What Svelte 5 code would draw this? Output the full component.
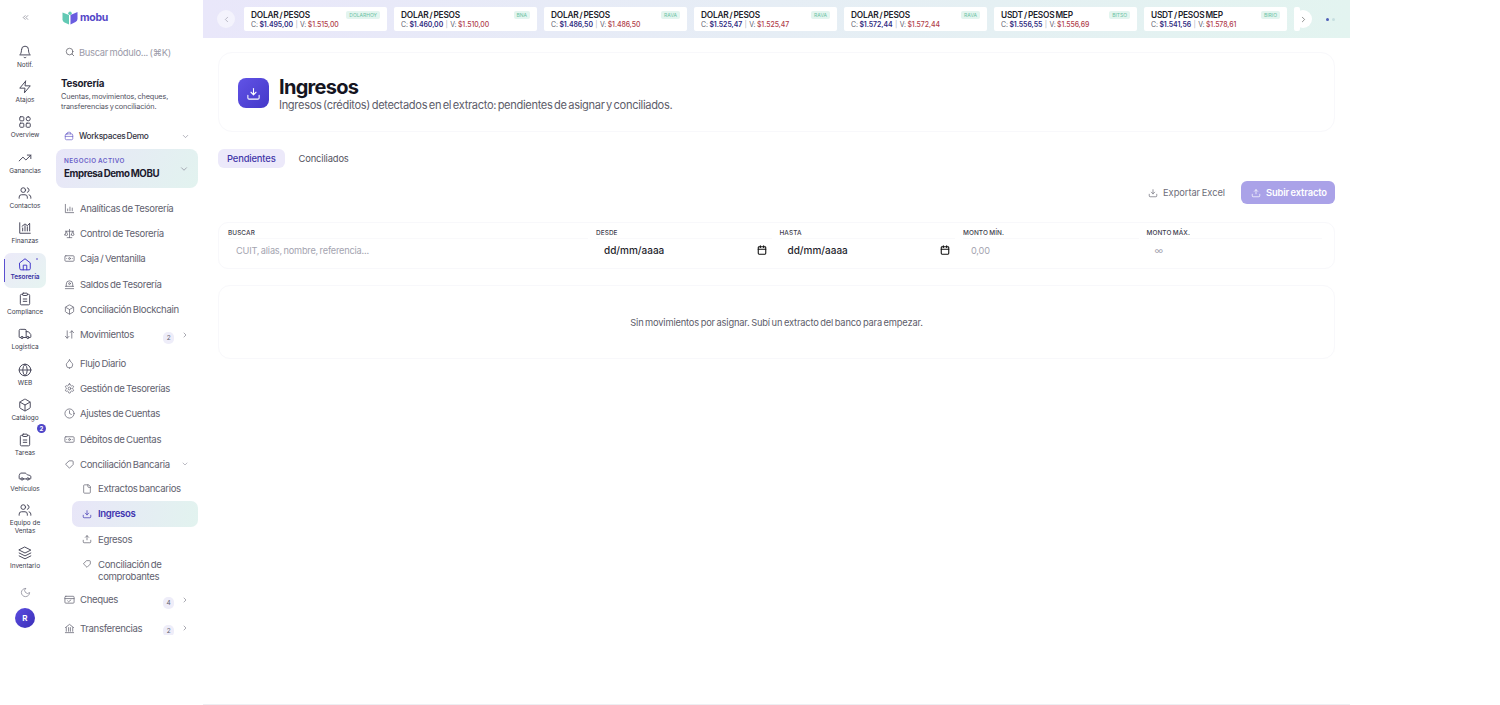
<script>
  const icons = {
    bell: '<path d="M6 8a6 6 0 0 1 12 0c0 7 3 9 3 9H3s3-2 3-9"/><path d="M10.3 21a1.94 1.94 0 0 0 3.4 0"/>',
    zap: '<path d="M13 2 3 14h9l-1 8 10-12h-9l1-8z"/>',
    grid: '<rect x="3" y="3" width="7" height="7" rx="1.5"/><rect x="14" y="3" width="7" height="7" rx="3.5"/><rect x="3" y="14" width="7" height="7" rx="1.5"/><rect x="14" y="14" width="7" height="7" rx="1.5"/>',
    trend: '<path d="m22 7-8.5 8.5-5-5L2 17"/><path d="M16 7h6v6"/>',
    users: '<path d="M16 21v-2a4 4 0 0 0-4-4H6a4 4 0 0 0-4 4v2"/><circle cx="9" cy="7" r="4"/><path d="M22 21v-2a4 4 0 0 0-3-3.87"/><path d="M16 3.13a4 4 0 0 1 0 7.75"/>',
    chart: '<path d="M3 3v18h18"/><path d="M8 17v-5"/><path d="M12 17V8"/><path d="M16 17v-7"/><path d="M20 17V5"/><path d="m7 9 5-4 4 3 4-4"/>',
    bars: '<path d="M3 3v18h18"/><path d="M8 17v-4"/><path d="M13 17V9"/><path d="M18 17v-6"/>',
    home: '<path d="m3 10 9-7 9 7v10a2 2 0 0 1-2 2H5a2 2 0 0 1-2-2z"/><path d="M9 22v-8h6v8"/>',
    clip: '<rect x="8" y="2" width="8" height="4" rx="1"/><path d="M16 4h2a2 2 0 0 1 2 2v14a2 2 0 0 1-2 2H6a2 2 0 0 1-2-2V6a2 2 0 0 1 2-2h2"/><path d="M9 12h6"/><path d="M9 16h6"/>',
    truck: '<path d="M14 18V6a2 2 0 0 0-2-2H4a2 2 0 0 0-2 2v11a1 1 0 0 0 1 1h2"/><path d="M15 18H9"/><path d="M19 18h2a1 1 0 0 0 1-1v-3.65a1 1 0 0 0-.22-.624l-3.48-4.35A1 1 0 0 0 17.52 8H14"/><circle cx="17" cy="18" r="2"/><circle cx="7" cy="18" r="2"/>',
    globe: '<circle cx="12" cy="12" r="10"/><path d="M12 2a14.5 14.5 0 0 0 0 20 14.5 14.5 0 0 0 0-20"/><path d="M2 12h20"/>',
    box: '<path d="M21 8a2 2 0 0 0-1-1.73l-7-4a2 2 0 0 0-2 0l-7 4A2 2 0 0 0 3 8v8a2 2 0 0 0 1 1.73l7 4a2 2 0 0 0 2 0l7-4A2 2 0 0 0 21 16Z"/><path d="m3.3 7 8.7 5 8.7-5"/><path d="M12 22V12"/>',
    car: '<path d="M19 17h2c.6 0 1-.4 1-1v-3c0-.9-.7-1.7-1.5-1.9C18.7 10.6 16 10 16 10s-1.3-1.4-2.2-2.3c-.5-.4-1.1-.7-1.8-.7H5c-.6 0-1.1.4-1.4.9l-1.4 2.9A3.7 3.7 0 0 0 2 12v4c0 .6.4 1 1 1h2"/><circle cx="7" cy="17" r="2"/><path d="M9 17h6"/><circle cx="17" cy="17" r="2"/>',
    layers: '<path d="m12 2 10 5-10 5L2 7z"/><path d="m2 12 10 5 10-5"/><path d="m2 17 10 5 10-5"/>',
    moon: '<path d="M12 3a6 6 0 0 0 9 9 9 9 0 1 1-9-9Z"/>',
    search: '<circle cx="11" cy="11" r="8"/><path d="m21 21-4.3-4.3"/>',
    brief: '<rect x="3" y="7" width="18" height="14" rx="3"/><path d="M8 7V5a2 2 0 0 1 2-2h4a2 2 0 0 1 2 2v2"/><path d="M3 13h18"/>',
    scale: '<path d="M12 3v18"/><path d="M7 21h10"/><path d="M3 7h18"/><path d="m2 15 3-8 3 8a4 4 0 0 1-6 0Z"/><path d="m16 15 3-8 3 8a4 4 0 0 1-6 0Z"/>',
    cash: '<rect x="2" y="6" width="20" height="12" rx="2"/><circle cx="12" cy="12" r="2"/><path d="M6 12h.01M18 12h.01"/>',
    vault: '<path d="M5 16v-5a7 7 0 0 1 14 0v5"/><path d="M3 16h18"/><path d="M3 21h18"/><circle cx="12" cy="10" r="2"/>',
    updown: '<path d="m3 16 4 4 4-4"/><path d="M7 20V4"/><path d="m21 8-4-4-4 4"/><path d="M17 4v16"/>',
    drop: '<path d="M12 22a7 7 0 0 0 7-7c0-2-1-3.9-3-5.5s-3.5-4-4-6.5c-.5 2.5-2 4.9-4 6.5C6 11.1 5 13 5 15a7 7 0 0 0 7 7z"/>',
    gear: '<path d="M12.22 2h-.44a2 2 0 0 0-2 2v.18a2 2 0 0 1-1 1.73l-.43.25a2 2 0 0 1-2 0l-.15-.08a2 2 0 0 0-2.73.73l-.22.38a2 2 0 0 0 .73 2.73l.15.1a2 2 0 0 1 1 1.72v.51a2 2 0 0 1-1 1.74l-.15.09a2 2 0 0 0-.73 2.73l.22.38a2 2 0 0 0 2.73.73l.15-.08a2 2 0 0 1 2 0l.43.25a2 2 0 0 1 1 1.73V20a2 2 0 0 0 2 2h.44a2 2 0 0 0 2-2v-.18a2 2 0 0 1 1-1.73l.43-.25a2 2 0 0 1 2 0l.15.08a2 2 0 0 0 2.73-.73l.22-.39a2 2 0 0 0-.73-2.73l-.15-.08a2 2 0 0 1-1-1.74v-.5a2 2 0 0 1 1-1.74l.15-.09a2 2 0 0 0 .73-2.73l-.22-.38a2 2 0 0 0-2.73-.73l-.15.08a2 2 0 0 1-2 0l-.43-.25a2 2 0 0 1-1-1.73V4a2 2 0 0 0-2-2z"/><circle cx="12" cy="12" r="3"/>',
    clock: '<circle cx="12" cy="12" r="10"/><path d="M12 6v6l4 2"/>',
    tag: '<path d="M12 4h6a2 2 0 0 1 2 2v6l-8 8-8-8z"/>',
    file: '<path d="M15 2H6a2 2 0 0 0-2 2v16a2 2 0 0 0 2 2h12a2 2 0 0 0 2-2V7Z"/><path d="M14 2v4a2 2 0 0 0 2 2h4"/>',
    down: '<path d="M21 15v4a2 2 0 0 1-2 2H5a2 2 0 0 1-2-2v-4"/><path d="m8 10 4 4 4-4"/><path d="M12 14V4"/>',
    up: '<path d="M21 15v4a2 2 0 0 1-2 2H5a2 2 0 0 1-2-2v-4"/><path d="m16 8-4-4-4 4"/><path d="M12 4v10"/>',
    cheque: '<rect x="2" y="5" width="20" height="15" rx="2"/><path d="M2 10h20"/><path d="m8 15 2 2 5-4"/>',
    bank: '<path d="m3 10 9-7 9 7"/><path d="M5 10v8M19 10v8M10 10v8M14 10v8"/><path d="M3 21h18"/>',
    calendar: '<rect x="3" y="4" width="18" height="18" rx="2"/><path d="M3 10h18"/><path d="M8 2v4M16 2v4"/>',
    left: '<path d="m15 18-6-6 6-6"/>',
    right: '<path d="m9 18 6-6-6-6"/>',
    chevdown: '<path d="m6 9 6 6 6-6"/>',
    dleft: '<path d="m11 17-5-5 5-5"/><path d="m18 17-5-5 5-5"/>'
  };

  const rail = [
    { icon: 'bell', label: 'Notif.' },
    { icon: 'zap', label: 'Atajos' },
    { icon: 'grid', label: 'Overview' },
    { icon: 'trend', label: 'Ganancias' },
    { icon: 'users', label: 'Contactos' },
    { icon: 'chart', label: 'Finanzas' },
    { icon: 'home', label: 'Tesorería', active: true },
    { icon: 'clip', label: 'Compliance' },
    { icon: 'truck', label: 'Logística' },
    { icon: 'globe', label: 'WEB' },
    { icon: 'box', label: 'Catálogo' },
    { icon: 'clip', label: 'Tareas', badge: 2 },
    { icon: 'car', label: 'Vehículos' },
    { icon: 'users', label: 'Equipo de Ventas' },
    { icon: 'layers', label: 'Inventario' }
  ];

  const topMenu = [
    { icon: 'bars', label: 'Analíticas de Tesorería' },
    { icon: 'scale', label: 'Control de Tesorería' },
    { icon: 'cash', label: 'Caja / Ventanilla' },
    { icon: 'vault', label: 'Saldos de Tesorería' },
    { icon: 'box', label: 'Conciliación Blockchain' },
    { icon: 'updown', label: 'Movimientos', count: 2 },
    { icon: 'drop', label: 'Flujo Diario' },
    { icon: 'gear', label: 'Gestión de Tesorerías' },
    { icon: 'clock', label: 'Ajustes de Cuentas' },
    { icon: 'cash', label: 'Débitos de Cuentas' }
  ];

  const quotes = [
    { pair: 'DOLAR / PESOS', tag: 'DOLARHOY', buy: '$1.495,00', sell: '$1.515,00' },
    { pair: 'DOLAR / PESOS', tag: 'BNA', buy: '$1.460,00', sell: '$1.510,00' },
    { pair: 'DOLAR / PESOS', tag: 'RAVA', buy: '$1.486,50', sell: '$1.486,50' },
    { pair: 'DOLAR / PESOS', tag: 'RAVA', buy: '$1.525,47', sell: '$1.525,47' },
    { pair: 'DOLAR / PESOS', tag: 'RAVA', buy: '$1.572,44', sell: '$1.572,44' },
    { pair: 'USDT / PESOS MEP', tag: 'BITSO', buy: '$1.556,55', sell: '$1.556,69' },
    { pair: 'USDT / PESOS MEP', tag: 'BIRIO', buy: '$1.541,56', sell: '$1.578,61' }
  ];
</script>

{#snippet icon(name, size)}
  <svg class="ico" width={size} height={size} viewBox="0 0 24 24" fill="none" stroke="currentColor" stroke-width="1.7" stroke-linecap="round" stroke-linejoin="round">{@html icons[name]}</svg>
{/snippet}

{#snippet menuRow(item)}
  <div class="menu-row" class:tall={item.count}>
    <span class="menu-ico">{@render icon(item.icon, 11)}</span>
    <span class="menu-label">{item.label}</span>
    {#if item.count}
      <span class="count">{item.count}</span>
      <span class="menu-chev">{@render icon('right', 8)}</span>
    {/if}
  </div>
{/snippet}

<div class="app">
  <nav class="rail">
    <div class="collapse">{@render icon('dleft', 9)}</div>
    <div class="rail-list">
      {#each rail as item}
        <div class="rail-item" class:active={item.active}>
          {@render icon(item.icon, 14)}
          <span>{item.label}</span>
          {#if item.badge}<b class="rail-badge">{item.badge}</b>{/if}
          {#if item.active}<i class="rail-dot"></i>{/if}
        </div>
      {/each}
    </div>
    <div class="moon">{@render icon('moon', 11)}</div>
    <div class="avatar">R</div>
  </nav>

  <aside class="panel">
    <div class="logo">
      <svg width="16" height="14" viewBox="0 0 15 14">
        <path d="M0 1.5 6.500 4v9.500L2 11.500Q0 10.500 0 8.500Z" fill="#62c9b4" />
        <path d="M15 1 8 4v9.500L13 11Q15 10 15 8Z" fill="#6a5de0" />
        <circle cx="7.500" cy="2.300" r="1.700" fill="#62c9b4" />
      </svg>
      <span>mobu</span>
    </div>

    <div class="search">
      {@render icon('search', 10)}
      <span>Buscar módulo... (⌘K)</span>
    </div>

    <div class="section">
      <h2>Tesorería</h2>
      <p>Cuentas, movimientos, cheques, transferencias y conciliación.</p>
    </div>

    <div class="workspace">
      <span class="ws-ico">{@render icon('brief', 10)}</span>
      <span class="ws-name">Workspaces Demo</span>
      <span class="ws-chev">{@render icon('chevdown', 9)}</span>
    </div>

    <div class="business">
      <div>
        <small>NEGOCIO ACTIVO</small>
        <strong>Empresa Demo MOBU</strong>
      </div>
      <span class="ws-chev">{@render icon('chevdown', 10)}</span>
    </div>

    <div class="menu">
      {#each topMenu as item}
        {@render menuRow(item)}
      {/each}
      <div class="menu-row">
        <span class="menu-ico">{@render icon('tag', 11)}</span>
        <span class="menu-label">Conciliación Bancaria</span>
        <span class="menu-chev open">{@render icon('chevdown', 8)}</span>
      </div>
      <div class="sub">
        <div class="sub-row">{@render icon('file', 10)}<span>Extractos bancarios</span></div>
        <div class="sub-row current">{@render icon('down', 10)}<span>Ingresos</span></div>
        <div class="sub-row">{@render icon('up', 10)}<span>Egresos</span></div>
        <div class="sub-row wrap">{@render icon('tag', 10)}<span>Conciliación de comprobantes</span></div>
      </div>
      {@render menuRow({ icon: 'cheque', label: 'Cheques', count: 4 })}
      {@render menuRow({ icon: 'bank', label: 'Transferencias', count: 2 })}
    </div>
  </aside>

  <main class="main">
    <div class="ticker">
      <button class="nav-btn" aria-label="Anterior">{@render icon('left', 9)}</button>
      <div class="quotes">
        {#each quotes as q}
          <div class="quote">
            <div class="quote-top">
              <span class="pair">{q.pair}</span>
              <span class="tag">{q.tag}</span>
            </div>
            <div class="prices">C: <b>{q.buy}</b> <i>|</i> V: <em>{q.sell}</em></div>
          </div>
        {/each}
        <div class="quote stub"></div>
      </div>
      <button class="nav-btn next" aria-label="Siguiente">{@render icon('right', 9)}</button>
      <div class="dots"><span></span><span></span></div>
    </div>

    <div class="content">
      <header class="hero">
        <div class="hero-ico">{@render icon('down', 15)}</div>
        <div>
          <h1>Ingresos</h1>
          <p>Ingresos (créditos) detectados en el extracto: pendientes de asignar y conciliados.</p>
        </div>
      </header>

      <div class="tabs">
        <span class="tab on">Pendientes</span>
        <span class="tab">Conciliados</span>
      </div>

      <div class="actions">
        <span class="export">{@render icon('down', 10)}Exportar Excel</span>
        <span class="upload">{@render icon('up', 10)}Subir extracto</span>
      </div>

      <section class="filters">
        <div class="field">
          <label for="q">BUSCAR</label>
          <div id="q" class="input muted">CUIT, alias, nombre, referencia...</div>
        </div>
        <div class="field">
          <label for="d1">DESDE</label>
          <div id="d1" class="input date">dd/mm/aaaa {@render icon('calendar', 10)}</div>
        </div>
        <div class="field">
          <label for="d2">HASTA</label>
          <div id="d2" class="input date">dd/mm/aaaa {@render icon('calendar', 10)}</div>
        </div>
        <div class="field">
          <label for="m1">MONTO MÍN.</label>
          <div id="m1" class="input muted">0,00</div>
        </div>
        <div class="field">
          <label for="m2">MONTO MÁX.</label>
          <div id="m2" class="input muted">∞</div>
        </div>
      </section>

      <section class="empty">Sin movimientos por asignar. Subí un extracto del banco para empezar.</section>
    </div>
  </main>
</div>

<style>
  :global(body) {
    margin: 0;
    background: #fff;
  }

  .app {
    display: flex;
    width: 1350px;
    height: 705px;
    font-family: Inter, 'Open Sans', sans-serif;
    word-spacing: -0.8px;
    color: #1c1b2e;
    overflow: hidden;
  }

  .ico {
    display: block;
    flex-shrink: 0;
  }

  /* rail */
  .rail {
    width: 50px;
    height: 632px;
    flex-shrink: 0;
    display: flex;
    flex-direction: column;
    align-items: center;
  }

  .collapse {
    height: 35px;
    display: flex;
    align-items: center;
    color: #6b6b7b;
  }

  .rail-list {
    width: 100%;
    padding-top: 6px;
  }

  .rail-item {
    position: relative;
    margin: 0 4px;
    min-height: 31.330px;
    padding-bottom: 4px;
    display: flex;
    flex-direction: column;
    align-items: center;
    justify-content: center;
    gap: 2px;
    color: #4a4a5c;
  }

  .rail-item:nth-child(14),
  .rail-item:nth-child(15) {
    margin-top: 3px;
  }

  .rail-item span {
    font-size: 6.500px;
    line-height: 8px;
    text-align: center;
    letter-spacing: -0.05px;
    color: #3d3d4d;
    word-spacing: 0;
  }

  .rail-item.active {
    background: linear-gradient(135deg, #eceaf9, #e6f4f1);
    border-radius: 7px;
    color: #4338ca;
  }

  .rail-item.active::before {
    content: '';
    position: absolute;
    left: 0;
    top: 6px;
    bottom: 6px;
    width: 1px;
    background: #5a4fd0;
  }

  .rail-item.active span {
    color: #3730a3;
    font-weight: 600;
  }

  .rail-dot {
    position: absolute;
    top: 5px;
    right: 8px;
    width: 2px;
    height: 2px;
    border-radius: 50%;
    background: #8b85d8;
  }

  .rail-badge {
    position: absolute;
    top: -6px;
    right: 0;
    width: 9px;
    height: 9px;
    border-radius: 50%;
    background: #4f46c8;
    color: #fff;
    font-size: 6px;
    line-height: 9px;
    text-align: center;
  }

  .moon {
    margin-top: 9px;
    color: #8a8a98;
  }

  .avatar {
    margin-top: 10px;
    width: 20px;
    height: 20px;
    border-radius: 50%;
    background: linear-gradient(135deg, #5b4de0, #3b2fb8);
    color: #fff;
    font-size: 8px;
    font-weight: 700;
    line-height: 20px;
    text-align: center;
  }

  /* side panel */
  .panel {
    width: 153px;
    height: 635px;
    flex-shrink: 0;
    overflow: hidden;
    padding: 0 5px 0 6px;
    box-sizing: border-box;
  }

  .logo {
    display: flex;
    align-items: center;
    gap: 2px;
    height: 35px;
    padding-left: 6px;
    color: #5548c8;
    font-size: 10.500px;
    font-weight: 700;
    letter-spacing: -0.3px;
  }

  .search {
    display: flex;
    align-items: center;
    gap: 4px;
    height: 26px;
    margin: 4px 3px 0 3px;
    padding-left: 6px;
    color: #9a9aa8;
    font-size: 9.400px;
    letter-spacing: -0.3px;
  }

  .search :global(svg) {
    color: #55555f;
  }

  .section {
    padding: 12px 5px 0;
  }

  .section h2 {
    margin: 0;
    font-size: 9.800px;
    line-height: 13px;
    font-weight: 700;
    letter-spacing: -0.2px;
  }

  .section p {
    margin: 2px 0 0;
    font-size: 7.300px;
    line-height: 9.500px;
    color: #50505e;
    letter-spacing: -0.12px;
  }

  .workspace {
    display: flex;
    align-items: center;
    gap: 5px;
    height: 24px;
    margin-top: 13px;
    padding: 0 8px;
    font-size: 8.300px;
    font-weight: 500;
    letter-spacing: -0.3px;
    color: #33333f;
  }

  .ws-ico {
    color: #6a5fc8;
  }

  .ws-name {
    flex: 1;
  }

  .ws-chev {
    color: #8a8a98;
  }

  .business {
    display: flex;
    align-items: center;
    justify-content: space-between;
    height: 39px;
    margin-top: 1px;
    padding: 0 9px 0 8px;
    border-radius: 8px;
    background: linear-gradient(120deg, #e8e6f8, #e2f3ef);
  }

  .business small {
    display: block;
    font-size: 6.300px;
    line-height: 9px;
    font-weight: 600;
    color: #6a5fc8;
    letter-spacing: 0.45px;
    word-spacing: -0.5px;
  }

  .business strong {
    display: block;
    margin-top: 2px;
    font-size: 9.700px;
    line-height: 12px;
    font-weight: 700;
    letter-spacing: -0.4px;
  }

  .menu {
    margin-top: 7.500px;
  }

  .menu-row {
    display: flex;
    align-items: center;
    height: 25.300px;
    padding: 0 8px;
    color: #62626f;
    font-size: 9.600px;
    letter-spacing: -0.35px;
  }

  .menu-row.tall {
    height: 28.500px;
    box-sizing: border-box;
    padding-bottom: 3px;
  }

  .menu-ico {
    width: 16px;
    color: #6a6a78;
  }

  .menu-label {
    flex: 1;
    white-space: nowrap;
  }

  .count {
    width: 11px;
    height: 12px;
    margin: 6px 7px 0 0;
    border-radius: 5px;
    background: #eeedf9;
    font-size: 6.500px;
    line-height: 12px;
    text-align: center;
  }

  .menu-chev {
    margin-right: 1px;
    color: #6a6a78;
  }

  .menu-chev.open {
    color: #8a8a98;
  }

  .sub {
    margin: -1px 0 0 16px;
  }

  .sub-row {
    display: flex;
    align-items: center;
    gap: 6px;
    height: 25.300px;
    padding-left: 10px;
    color: #62626f;
    font-size: 9.600px;
    letter-spacing: -0.35px;
  }

  .sub-row.current {
    background: linear-gradient(100deg, #e8e6f8, #e2f3ef);
    border-radius: 7px;
    color: #3f35b0;
    font-weight: 600;
  }

  .sub-row.wrap {
    height: 35px;
    align-items: flex-start;
    padding-top: 7px;
    box-sizing: border-box;
    line-height: 12.500px;
  }

  /* main */
  .main {
    flex: 1;
    min-width: 0;
    border-bottom: 1px solid #eeeef2;
    height: 704px;
  }

  .ticker {
    display: flex;
    align-items: center;
    height: 38px;
    background: linear-gradient(90deg, #e9e7fa, #e3f4f0);
    overflow: hidden;
  }

  .nav-btn {
    flex-shrink: 0;
    width: 18px;
    height: 18px;
    margin-left: 14px;
    padding: 0;
    border: 0;
    border-radius: 50%;
    display: flex;
    align-items: center;
    justify-content: center;
    background: rgba(255, 255, 255, 0.5);
    color: #9a9aa8;
  }

  .nav-btn.next {
    position: relative;
    margin-left: -6px;
    background: #fff;
    color: #555;
  }

  .quotes {
    display: flex;
    gap: 7px;
    margin-left: 9px;
    width: 1056px;
    overflow: hidden;
    flex-shrink: 0;
  }

  .quote {
    width: 143px;
    height: 24px;
    flex-shrink: 0;
    box-sizing: border-box;
    padding: 3px 7px 0;
    background: #fff;
    border-radius: 2px;
  }

  .quote.stub {
    width: 6px;
    padding: 0;
  }

  .quote-top {
    display: flex;
    align-items: center;
    justify-content: space-between;
    height: 9px;
  }

  .pair {
    font-size: 8.300px;
    font-weight: 600;
    letter-spacing: -0.22px;
    color: #1f1f2e;
  }

  .tag {
    padding: 1px 3px;
    border-radius: 2px;
    background: #e3f5ef;
    color: #6cc2a4;
    font-size: 5px;
    line-height: 6px;
    word-spacing: 0;
  }

  .prices {
    margin-top: 1px;
    font-size: 6.900px;
    line-height: 10px;
    word-spacing: -0.5px;
    letter-spacing: -0.03px;
    color: #606070;
    white-space: nowrap;
  }

  .prices b {
    font-weight: 600;
    color: #2f2a80;
  }

  .prices i {
    font-style: normal;
    color: #b0b0ba;
    margin: 0 1px;
  }

  .prices em {
    font-style: normal;
    font-weight: 500;
    color: #b0404c;
  }

  .dots {
    display: flex;
    gap: 3px;
    margin-left: 14px;
  }

  .dots span {
    width: 3px;
    height: 3px;
    border-radius: 50%;
    background: #c6dfe0;
  }

  .dots span:first-child {
    background: #4f5fb8;
  }

  .content {
    padding: 14px 15px 0;
  }

  .hero {
    display: flex;
    align-items: center;
    gap: 10px;
    height: 80px;
    box-sizing: border-box;
    padding: 2px 19px 0;
    border: 1px solid #f8f8fb;
    border-radius: 14px;
  }

  .hero-ico {
    width: 31px;
    height: 30px;
    display: flex;
    align-items: center;
    justify-content: center;
    border-radius: 8px;
    background: linear-gradient(135deg, #6153e6, #4438c8);
    color: #fff;
  }

  .hero h1 {
    margin: 0;
    font-size: 20px;
    line-height: 24px;
    font-weight: 700;
    letter-spacing: -0.7px;
    color: #15151f;
  }

  .hero p {
    margin: 0;
    font-size: 11.100px;
    line-height: 13px;
    color: #5d5d6a;
    letter-spacing: -0.33px;
    word-spacing: -1.2px;
  }

  .tabs {
    display: flex;
    gap: 5px;
    margin-top: 17px;
  }

  .tab {
    height: 19px;
    padding: 0 9px;
    border-radius: 6px;
    font-size: 9.400px;
    letter-spacing: -0.15px;
    line-height: 19px;
    color: #55555f;
  }

  .tab.on {
    background: #ece9fa;
    color: #3f35a8;
    font-weight: 500;
  }

  .actions {
    display: flex;
    justify-content: flex-end;
    align-items: center;
    gap: 16px;
    margin-top: 13px;
    height: 23px;
  }

  .export {
    display: flex;
    align-items: center;
    gap: 5px;
    color: #6d6d79;
    font-size: 9.300px;
    letter-spacing: -0.05px;
    white-space: nowrap;
  }

  .upload {
    display: flex;
    align-items: center;
    gap: 5px;
    width: 94px;
    height: 23px;
    box-sizing: border-box;
    padding-left: 10px;
    border-radius: 6px;
    background: #aaa2e8;
    color: #fff;
    font-size: 9.400px;
    font-weight: 600;
    letter-spacing: -0.15px;
    white-space: nowrap;
  }

  .filters {
    display: grid;
    grid-template-columns: 360px repeat(4, 1fr);
    gap: 8px;
    height: 47px;
    box-sizing: border-box;
    margin-top: 18px;
    padding: 6px 12px 0 9px;
    border: 1px solid #f8f8fb;
    border-radius: 10px;
  }

  .field label {
    display: block;
    font-size: 6.400px;
    line-height: 8px;
    font-weight: 500;
    color: #3d3d4d;
    letter-spacing: 0.1px;
    word-spacing: -0.5px;
  }

  .input {
    display: flex;
    align-items: center;
    height: 22px;
    margin-top: 1px;
    padding-left: 8px;
    font-size: 9.200px;
    letter-spacing: -0.2px;
    border-top: 1px solid #f9f9fb;
  }

  .muted {
    color: #a4a4b0;
  }

  .date {
    justify-content: space-between;
    padding-right: 5px;
    color: #1f1f2e;
    font-size: 10px;
    letter-spacing: 0;
    font-weight: 500;
  }

  .date :global(svg) {
    stroke-width: 2.6;
    color: #111;
  }

  .empty {
    display: flex;
    align-items: center;
    justify-content: center;
    height: 74px;
    box-sizing: border-box;
    margin-top: 16px;
    border: 1px solid #f8f8fb;
    border-radius: 12px;
    font-size: 9.300px;
    letter-spacing: -0.17px;
    color: #5d5d6a;
  }
</style>
